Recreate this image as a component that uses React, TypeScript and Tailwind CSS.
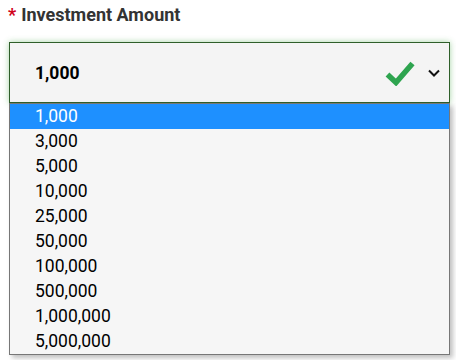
import { useState } from "react";

const amounts = [
  "1,000",
  "3,000",
  "5,000",
  "10,000",
  "25,000",
  "50,000",
  "100,000",
  "500,000",
  "1,000,000",
  "5,000,000",
];

function Check() {
  return (
    <svg width="30" height="26" viewBox="0 0 30 26" className="block">
      <path
        d="M2.5 14.5 L11 22.5 L27.5 3.5"
        fill="none"
        stroke="#2ea44f"
        strokeWidth="5.5"
        strokeLinecap="butt"
        strokeLinejoin="miter"
      />
    </svg>
  );
}

function Chevron() {
  return (
    <svg width="12" height="8" viewBox="0 0 12 8" className="block">
      <path d="M1 1.5 L6 6.5 L11 1.5" fill="none" stroke="#111" strokeWidth="2" />
    </svg>
  );
}

export default function App() {
  const [value] = useState("1,000");

  return (
    <div className="relative h-[360px] w-[456px] overflow-hidden bg-white font-['Roboto',sans-serif]">
      <div className="flex items-center gap-[5px] pl-[8px] pt-[2px] text-[18px] font-bold leading-[26px] text-[#333]">
        <span className="text-[#d0021b]">*</span>
        <span>Investment Amount</span>
      </div>

      <div className="relative ml-[9px] mt-[14px] w-[441px]">
        <div className="flex h-[61px] items-center border border-[#2f5f2a] bg-[#f4f4f4] pl-[25px] pr-[9px] shadow-[0_0_6px_rgba(60,160,60,0.45)]">
          <span className="mt-[2px] flex-1 text-[17.5px] font-bold text-black">{value}</span>
          <Check />
          <span className="ml-[13px] mt-[1px]">
            <Chevron />
          </span>
        </div>

        <ul className="absolute left-0 top-[61px] w-[441px] border border-[#777] bg-[#f6f6f6] shadow-[3px_3px_5px_rgba(0,0,0,0.25)]">
          {amounts.map((a, i) => (
            <li
              key={a}
              className={
                i === 0
                  ? "h-[25px] bg-[#1e90ff] pl-[25px] text-[17.5px] leading-[25px] text-white"
                  : "h-[25px] pl-[25px] text-[17.5px] leading-[25px] text-black"
              }
            >
              {a}
            </li>
          ))}
        </ul>
      </div>
    </div>
  );
}
